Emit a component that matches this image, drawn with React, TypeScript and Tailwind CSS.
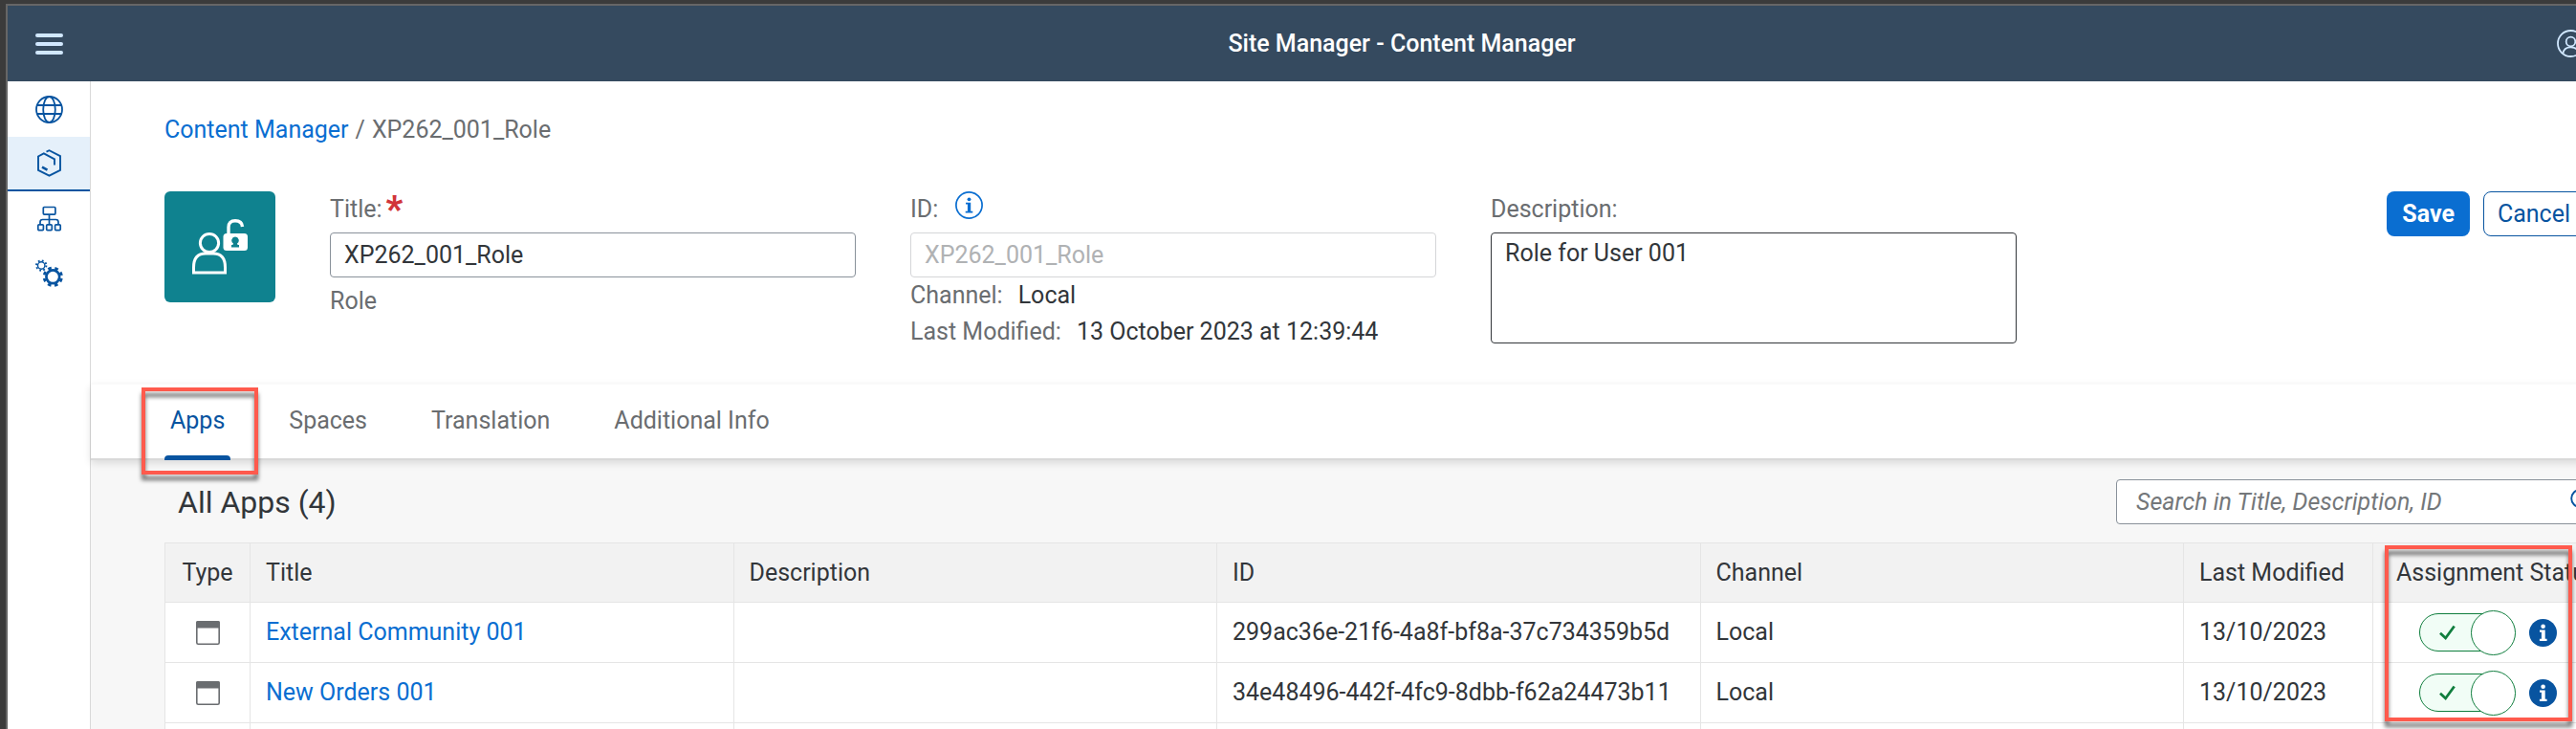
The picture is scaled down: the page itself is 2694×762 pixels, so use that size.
import React from 'react';

type AppRow = { title: string; id: string; channel: string; modified: string };

const apps: AppRow[] = [
  {
    title: 'External Community 001',
    id: '299ac36e-21f6-4a8f-bf8a-37c734359b5d',
    channel: 'Local',
    modified: '13/10/2023',
  },
  {
    title: 'New Orders 001',
    id: '34e48496-442f-4fc9-8dbb-f62a24473b11',
    channel: 'Local',
    modified: '13/10/2023',
  },
];

const tabs = ['Apps', 'Spaces', 'Translation', 'Additional Info'];

function MenuIcon() {
  return (
    <svg width="29" height="22" viewBox="0 0 29 22" fill="#d1e8ff" aria-hidden="true">
      <rect x="0" y="0" width="29" height="4" rx="2" />
      <rect x="0" y="9" width="29" height="4" rx="2" />
      <rect x="0" y="18" width="29" height="4" rx="2" />
    </svg>
  );
}

function UserIcon() {
  return (
    <svg width="29" height="29" viewBox="0 0 29 29" fill="none" stroke="#d1e8ff" strokeWidth="1.8" aria-hidden="true">
      <circle cx="14.5" cy="14.5" r="13.5" />
      <circle cx="14.5" cy="12.5" r="4.8" />
      <path d="M6.3 25C7 20.300 10.200 18.300 14.500 18.300S22 20.300 22.700 25" />
    </svg>
  );
}

function GlobeIcon() {
  return (
    <svg width="29" height="29" viewBox="0 0 29 29" fill="none" stroke="#0854a0" strokeWidth="1.800" aria-hidden="true">
      <circle cx="14.5" cy="14.5" r="13.500" />
      <ellipse cx="14.5" cy="14.5" rx="6.300" ry="13.500" />
      <path d="M2 10h25M2 19h25" />
    </svg>
  );
}

function ContentIcon() {
  return (
    <svg width="29" height="29" viewBox="0 0 29 29" fill="none" stroke="#0854a0" strokeWidth="1.9" aria-hidden="true">
      <path d="M11.500 2.600 14.500 1.200 26 7.200V21.800L14.500 27.600 3 21.800V7.500L8.800 4.400 20 10.300V16.500" />
      <path d="M7 18.700 12.500 21.700" strokeWidth="2.600" />
    </svg>
  );
}

function HierarchyIcon() {
  return (
    <svg width="29" height="29" viewBox="0 0 29 29" fill="none" stroke="#0854a0" strokeWidth="1.7" aria-hidden="true">
      <rect x="8.300" y="2.500" width="12.600" height="7.600" rx="1" />
      <rect x="2.800" y="20.800" width="5.600" height="5.800" rx="1" />
      <rect x="11.700" y="20.800" width="5.600" height="5.800" rx="1" />
      <rect x="20.600" y="20.800" width="5.600" height="5.800" rx="1" />
      <path d="M14.500 10V20.500M5 20.500V18Q5 15.500 7.500 15.500H21.500Q24 15.500 24 18V20.500" />
    </svg>
  );
}

function SettingsIcon() {
  return (
    <svg width="29" height="29" viewBox="0 0 29 29" fill="none" stroke="#0854a0" aria-hidden="true">
      <circle cx="6.200" cy="6.500" r="3.700" strokeWidth="1.400" />
      <circle cx="6.200" cy="6.500" r="5.200" strokeWidth="1.900" strokeDasharray="1.800 2.284" />
      <circle cx="18.300" cy="18.300" r="6.900" strokeWidth="2.700" />
      <circle cx="18.300" cy="18.300" r="9.200" strokeWidth="2.800" strokeDasharray="3.600 3.625" strokeDashoffset="-1.800" />
    </svg>
  );
}

function RoleIcon() {
  return (
    <svg width="58" height="58" viewBox="0 0 58 58" fill="none" stroke="#ffffff" aria-hidden="true">
      <circle cx="18" cy="25" r="9.600" strokeWidth="3" />
      <path d="M1.500 56V50.500Q1.500 36 14 36H22Q34.500 36 34.500 50.500V56Z" strokeWidth="3" />
      <path d="M38 16V8.500Q38 1.800 45 1.800Q52 1.800 52.500 8" strokeWidth="3.400" />
      <rect x="32.500" y="15" width="25.500" height="18" rx="3.500" fill="#ffffff" stroke="none" />
      <path d="M45 18.500a3.800 3.800 0 0 1 2 7l.6 1.500h1.400v2.500h-8v-2.500h1.400l.6-1.500a3.800 3.800 0 0 1 2-7Z" fill="#0f828f" stroke="none" />
    </svg>
  );
}

function InfoOutlineIcon() {
  return (
    <svg width="29" height="29" viewBox="0 0 29 29" aria-hidden="true">
      <circle cx="14.5" cy="14.5" r="13.600" fill="none" stroke="#0a6ed1" strokeWidth="1.700" />
      <circle cx="14.5" cy="8.300" r="1.900" fill="#0a6ed1" />
      <path d="M11 11.700h5.200v9h2.100v1.900h-7.600v-1.900h2.200v-7.100H11Z" fill="#0a6ed1" />
    </svg>
  );
}

function InfoSolidIcon() {
  return (
    <svg width="29" height="29" viewBox="0 0 29 29" aria-hidden="true">
      <circle cx="14.5" cy="14.5" r="14.500" fill="#0854a0" />
      <circle cx="14.6" cy="7.800" r="2.300" fill="#ffffff" />
      <path d="M11 11.500h5.700v9.200h1.900v2.200h-7.700v-2.200h2v-7H11Z" fill="#ffffff" />
    </svg>
  );
}

function WindowIcon() {
  return (
    <svg width="25" height="25" viewBox="0 0 25 25" aria-hidden="true">
      <rect x="0.800" y="0.800" width="23.400" height="23.400" rx="1.500" fill="none" stroke="#6a6d70" strokeWidth="1.600" />
      <path d="M0 2Q0 0 2 0H23Q25 0 25 2V7.500H0Z" fill="#6a6d70" />
    </svg>
  );
}

function SearchIcon() {
  return (
    <svg width="27" height="27" viewBox="0 0 27 27" fill="none" stroke="#0854a0" strokeWidth="1.900" aria-hidden="true">
      <circle cx="10" cy="10" r="8.800" />
      <path d="M16.500 16.500 25 25" />
    </svg>
  );
}

function Toggle({ name }: { name: string }) {
  return (
    <label className="relative flex h-[47px] w-[101px] items-center">
      <input type="checkbox" role="switch" defaultChecked aria-label={`Assign ${name}`} className="peer sr-only" />
      <span className="flex h-10 w-[92px] items-center rounded-full border border-[#107e3e] bg-[#f1fdf6] pl-5">
        <svg width="17" height="17" viewBox="0 0 17 17" fill="none" stroke="#107e3e" strokeWidth="2.800" aria-hidden="true">
          <path d="M1 8.800 6.600 14 15.700 1.500" />
        </svg>
      </span>
      <span className="absolute right-0 size-[47px] rounded-full border border-[#107e3e] bg-white" />
    </label>
  );
}

const navItem = 'flex h-[57px] w-full items-center justify-center';
const label = 'flex h-[43px] pb-1.5 items-center text-[#6a6d70]';
const headCell = 'border border-[#e5e5e5] px-4 text-left font-normal';
const cell = 'border border-[#e5e5e5] px-4';

export default function App() {
  return (
    <div className="flex h-screen overflow-hidden bg-[#3b3b3b] pt-1 pl-1.5 font-[Roboto,sans-serif] text-[25px] leading-[38px] text-[#32363a]">
      <div className="flex min-w-0 flex-1 flex-col border-t-2 border-l-2 border-[#666666] bg-white">
        <header className="-mr-[230px] flex h-[79px] shrink-0 items-center bg-[#354a5f] pr-[221px] pl-[29px]">
          <div className="flex flex-1">
            <button type="button" aria-label="Menu">
              <MenuIcon />
            </button>
          </div>
          <h1 className="ml-48 font-medium text-white">Site Manager - Content Manager</h1>
          <div className="flex flex-1 justify-end">
            <button type="button" aria-label="User">
              <UserIcon />
            </button>
          </div>
        </header>

        <div className="flex min-h-0 flex-1">
          <nav aria-label="Main" className="w-[87px] shrink-0 border-r border-[#d9d9d9] bg-white pt-px">
            <button type="button" aria-label="Sites" className={navItem}>
              <GlobeIcon />
            </button>
            <button type="button" aria-label="Content" className={`${navItem} border-b-2 border-[#0854a0] bg-[#e5f0fa]`}>
              <ContentIcon />
            </button>
            <button type="button" aria-label="Channels" className={navItem}>
              <HierarchyIcon />
            </button>
            <button type="button" aria-label="Settings" className={navItem}>
              <SettingsIcon />
            </button>
          </nav>

          <main className="-mr-7 flex min-w-0 flex-1 flex-col bg-[#f7f7f7]">
            <section className="bg-white pt-8 pr-[19px] pb-[35px] pl-[77px]">
              <div className="flex gap-[7px] text-[#6a6d70]">
                <a href="#content" className="text-[#0a6ed1]">Content Manager</a>
                <span>/</span>
                <span>XP262_001_Role</span>
              </div>

              <div className="mt-[45px] flex gap-[57px]">
                <div className="flex size-[116px] shrink-0 items-center justify-center rounded-md bg-[#0f828f]">
                  <RoleIcon />
                </div>

                <div className="max-w-[550px] flex-1">
                  <label htmlFor="title" className={label}>
                    Title:<span className="pl-1 text-[38px] font-black text-[#d1353a]">*</span>
                  </label>
                  <input
                    id="title"
                    defaultValue="XP262_001_Role"
                    className="block h-[47px] w-full rounded border border-[#89919a] bg-white px-3.5"
                  />
                  <p className="pt-1.5 text-[#6a6d70]">Role</p>
                </div>

                <div className="max-w-[550px] flex-1">
                  <div className="flex gap-[18px]">
                    <label htmlFor="role-id" className={label}>ID:</label>
                    <button type="button" aria-label="About the ID" className="self-start">
                      <InfoOutlineIcon />
                    </button>
                  </div>
                  <input
                    id="role-id"
                    defaultValue="XP262_001_Role"
                    disabled
                    className="block h-[47px] w-full rounded border border-[#d5d6d8] bg-white px-3.5 text-[#b0b2b4]"
                  />
                  <dl>
                    <div className="flex gap-4">
                      <dt className="text-[#6a6d70]">Channel:</dt>
                      <dd>Local</dd>
                    </div>
                    <div className="flex gap-4">
                      <dt className="text-[#6a6d70]">Last Modified:</dt>
                      <dd>13 October 2023 at 12:39:44</dd>
                    </div>
                  </dl>
                </div>

                <div className="max-w-[550px] flex-1">
                  <label htmlFor="description" className={label}>Description:</label>
                  <textarea
                    id="description"
                    defaultValue="Role for User 001"
                    className="block h-[116px] w-full resize-none rounded border border-[#32363a] bg-white px-3.5 pt-1.5 leading-[30px]"
                  />
                </div>

                <div className="ml-auto flex h-[47px] gap-3.5">
                  <button type="button" className="rounded-lg bg-[#0a6ed1] px-4 font-bold text-white">Save</button>
                  <button type="button" className="rounded-lg border border-[#0854a0] bg-white px-3.5 text-[#0854a0]">Cancel</button>
                </div>
              </div>
            </section>

            <div
              role="tablist"
              className="relative flex h-20 shrink-0 gap-[55px] border-b-2 border-[#d9d9d9] bg-white pl-[77px] shadow-[inset_0_1px_0_#fafafa,0_3px_8px_rgba(0,0,0,0.12)]"
            >
              {tabs.map((tab, i) => (
                <div key={tab} className="relative flex">
                  <button
                    type="button"
                    role="tab"
                    aria-selected={i === 0}
                    className={i === 0 ? 'px-1.5 text-[#0854a0]' : 'px-1.5 text-[#6a6d70]'}
                  >
                    {tab}
                  </button>
                  {i === 0 && (
                    <>
                      <span className="absolute inset-x-0 -bottom-0.5 h-[5px] rounded-t bg-[#0854a0]" />
                      <span className="pointer-events-none absolute top-1 -left-6 h-[91px] w-[122px] border-4 border-[#ff5a4d] drop-shadow-[0_6px_2px_rgba(0,0,0,0.55)]" />
                    </>
                  )}
                </div>
              ))}
            </div>

            <section className="pl-[77px]">
              <div className="flex items-center justify-between pt-5 pb-[19px] pl-3.5">
                <h2 className="text-[32px]">All Apps (4)</h2>
                <div className="flex h-[47px] w-[509px] items-center rounded border border-[#89919a] bg-white pr-1.5 pl-5">
                  <input
                    type="search"
                    aria-label="Search apps"
                    placeholder="Search in Title, Description, ID"
                    className="min-w-0 flex-1 italic outline-none placeholder:text-[#74777a]"
                  />
                  <button type="button" aria-label="Search">
                    <SearchIcon />
                  </button>
                </div>
              </div>

              <div className="relative">
                <table className="w-full table-fixed border-collapse bg-white">
                  <colgroup>
                    <col className="w-[89px]" />
                    <col />
                    <col />
                    <col />
                    <col />
                    <col className="w-[198px]" />
                    <col className="w-[240px]" />
                  </colgroup>
                  <thead>
                    <tr className="h-[62px] bg-[#f2f2f2]">
                      <th className="border border-[#e5e5e5] text-center font-normal">Type</th>
                      <th className={headCell}>Title</th>
                      <th className={headCell}>Description</th>
                      <th className={headCell}>ID</th>
                      <th className={headCell}>Channel</th>
                      <th className={headCell}>Last Modified</th>
                      <th className="border border-[#e5e5e5] pl-6 text-left font-normal whitespace-nowrap">Assignment Status</th>
                    </tr>
                  </thead>
                  <tbody>
                    {apps.map((app) => (
                      <tr key={app.id} className="h-[63px]">
                        <td className={cell}>
                          <div className="flex justify-center">
                            <WindowIcon />
                          </div>
                        </td>
                        <td className={cell}>
                          <a href="#app" className="text-[#0a6ed1]">{app.title}</a>
                        </td>
                        <td className={cell} />
                        <td className={cell}>{app.id}</td>
                        <td className={cell}>{app.channel}</td>
                        <td className={cell}>{app.modified}</td>
                        <td className={cell}>
                          <div className="flex items-center justify-center gap-3.5">
                            <Toggle name={app.title} />
                            <button type="button" aria-label={`Details of ${app.title}`}>
                              <InfoSolidIcon />
                            </button>
                          </div>
                        </td>
                      </tr>
                    ))}
                    <tr className="h-[63px]">
                      <td className={cell} />
                      <td className={cell} />
                      <td className={cell} />
                      <td className={cell} />
                      <td className={cell} />
                      <td className={cell} />
                      <td className={cell} />
                    </tr>
                  </tbody>
                </table>
                <span className="pointer-events-none absolute top-[3px] right-8 h-[184px] w-[196px] border-4 border-[#ff5a4d] drop-shadow-[0_6px_2px_rgba(0,0,0,0.55)]" />
              </div>
            </section>
          </main>
        </div>
      </div>
    </div>
  );
}
